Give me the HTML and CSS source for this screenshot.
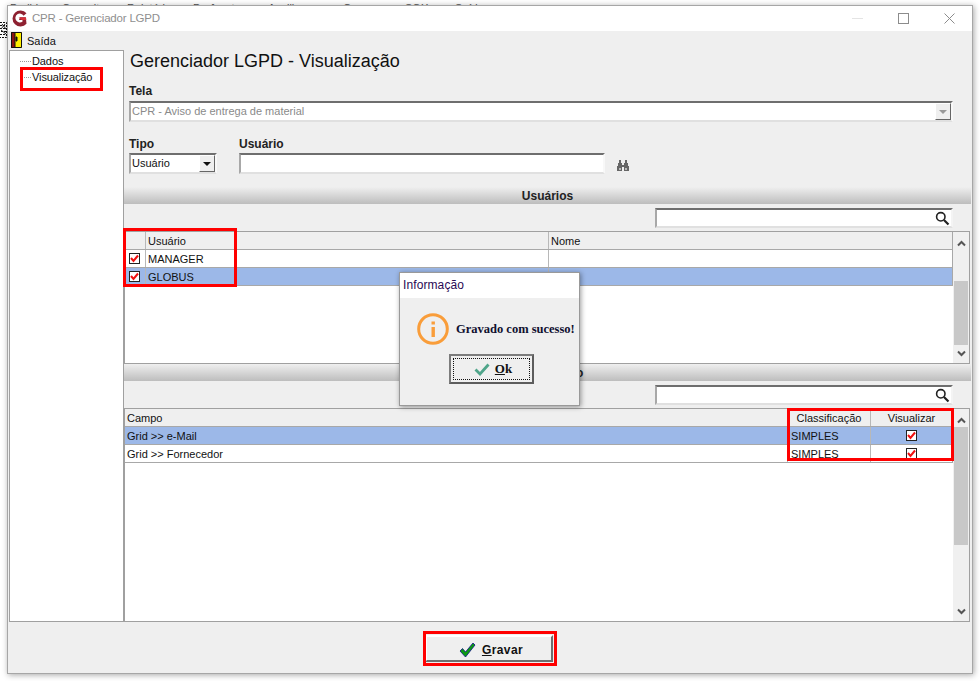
FILE: index.html
```html
<!DOCTYPE html>
<html lang="pt">
<head>
<meta charset="utf-8">
<title>CPR - Gerenciador LGPD</title>
<link rel="stylesheet" href="styles.css">
</head>
<body>
<div class="behind-menu">
  <span>Pedidos</span><span>Consultas</span><span>Relatórios</span><span>Parâmetros</span><span>Auxiliares</span><span>Compras</span><span>SOX</span><span>Saída</span>
</div>
<svg class="behind-icon" width="7" height="16" viewBox="0 0 7 16"><rect x="0" y="0" width="7" height="16" fill="#fff"/><path d="M0 .5h6.500v15H0M0 3.500h6M0 6.500h6M1 9.500h5M0 12.500h6" fill="none" stroke="#111" stroke-dasharray="2 1"/><path d="M2 2l4 5M1 8l5 4M5 2L1 7" fill="none" stroke="#222"/></svg>

<main class="window">
  <header class="titlebar">
    <svg class="app-logo" width="17" height="17" viewBox="0 0 17 17"><path d="M15.500 3.200A8 8 0 1 0 15.500 13.800L14.800 7.200H9L8 10H11.400L11.600 11.400A4.400 4.400 0 1 1 12.600 5.800Z" fill="#8e2131"/><path d="M7.500 7.400H15L15.300 10H11Z" fill="#d8313a"/></svg>
    <span class="title-text">CPR - Gerenciador LGPD</span>
    <div class="win-buttons">
      <svg class="win-min" width="11" height="11" viewBox="0 0 11 11"><path d="M0 5.500H11" stroke="#e4e4e4"/></svg>
      <svg class="win-max" width="11" height="11" viewBox="0 0 11 11"><rect x=".5" y=".5" width="10" height="10" fill="none" stroke="#8c8c8c"/></svg>
      <svg class="win-close" width="11" height="11" viewBox="0 0 11 11"><path d="M.5 .5L10.500 10.500M10.500 .5L.5 10.500" stroke="#8c8c8c"/></svg>
    </div>
  </header>

  <nav class="menubar">
    <svg class="exit-icon" width="11" height="16" viewBox="0 0 11 16"><rect width="11" height="16" fill="#ffef00"/><path d="M0 0h4v16H0z" fill="#8c1414"/><path d="M.5 .5h10v15H.5z" fill="none" stroke="#111"/><path d="M4 1v14M5 5h1v4H5z" stroke="#111" fill="#111"/></svg>
    <span>Saída</span>
  </nav>

  <div class="body">
    <aside class="tree">
      <div class="tree-item"><i class="dots"></i>Dados</div>
      <div class="tree-item tree-second"><i class="dots"></i>Visualização</div>
    </aside>

    <section class="pane">
      <h1 class="pane-title">Gerenciador LGPD - Visualização</h1>

      <label class="field-label tela-label">Tela</label>
      <div class="combo disabled">
        <span>CPR - Aviso de entrega de material</span>
        <b class="combo-btn"><i class="arrow gray"></i></b>
      </div>

      <div class="form-row">
        <div class="tipo-field">
          <label class="field-label">Tipo</label>
          <div class="combo"><span>Usuário</span><b class="combo-btn"><i class="arrow"></i></b></div>
        </div>
        <div class="user-field">
          <label class="field-label">Usuário</label>
          <div class="combo input"></div>
        </div>
        <svg class="binoc" width="12" height="11" viewBox="0 0 12 11" shape-rendering="crispEdges"><path d="M2 0h2v3h1v2h2V3h1V0h2v3h1v3h1v5H7V7H5v4H0V6h1V3h1z" fill="#666"/><path d="M2 8h2v2H2zM8 8h2v2H8z" fill="#bbb"/></svg>
      </div>

      <div class="section-bar first-bar">Usuários</div>
      <div class="search-row">
        <div class="search"><svg width="15" height="15" viewBox="0 0 15 15"><circle cx="5.800" cy="5.800" r="4.200" fill="none" stroke="#222" stroke-width="1.600"/><path d="M9 9l4.500 4.500" stroke="#222" stroke-width="2.200"/></svg></div>
      </div>
      <div class="gridbox users-box">
        <div class="grid">
          <div class="row head cols-users"><div></div><div class="cell">Usuário</div><div class="cell">Nome</div></div>
          <div class="row cols-users"><div class="cell center lead"><svg class="check" width="11" height="11" viewBox="0 0 11 11"><rect x=".5" y=".5" width="10" height="10" fill="#fff" stroke="#222"/><path d="M2 5L4.500 8L9 2.500" fill="none" stroke="#f01010" stroke-width="2"/></svg></div><div class="cell">MANAGER</div><div class="cell"></div></div>
          <div class="row selected cols-users"><div class="cell center lead"><svg class="check" width="11" height="11" viewBox="0 0 11 11"><rect x=".5" y=".5" width="10" height="10" fill="#fff" stroke="#222"/><path d="M2 5L4.500 8L9 2.500" fill="none" stroke="#f01010" stroke-width="2"/></svg></div><div class="cell">GLOBUS</div><div class="cell"></div></div>
        </div>
        <div class="scrollbar">
          <svg class="sb-arrow" width="9" height="7" viewBox="0 0 9 7"><path d="M1 5.500L4.500 2L8 5.500" fill="none" stroke="#555" stroke-width="2"/></svg>
          <div class="sb-track"><div class="sb-thumb thumb-users"></div></div>
          <svg class="sb-arrow" width="9" height="7" viewBox="0 0 9 7"><path d="M1 1.500L4.500 5L8 1.500" fill="none" stroke="#555" stroke-width="2"/></svg>
        </div>
      </div>

      <div class="section-bar">Visualização</div>
      <div class="search-row">
        <div class="search"><svg width="15" height="15" viewBox="0 0 15 15"><circle cx="5.800" cy="5.800" r="4.200" fill="none" stroke="#222" stroke-width="1.600"/><path d="M9 9l4.500 4.500" stroke="#222" stroke-width="2.200"/></svg></div>
      </div>
      <div class="gridbox fields-box">
        <div class="grid">
          <div class="row head cols-fields"><div class="cell">Campo</div><div class="cell mid">Classificação</div><div class="cell mid">Visualizar</div></div>
          <div class="row selected cols-fields"><div class="cell">Grid &gt;&gt; e-Mail</div><div class="cell tight">SIMPLES</div><div class="cell center"><svg class="check" width="11" height="11" viewBox="0 0 11 11"><rect x=".5" y=".5" width="10" height="10" fill="#fff" stroke="#222"/><path d="M2 5L4.500 8L9 2.500" fill="none" stroke="#f01010" stroke-width="2"/></svg></div></div>
          <div class="row cols-fields"><div class="cell">Grid &gt;&gt; Fornecedor</div><div class="cell tight">SIMPLES</div><div class="cell center"><svg class="check" width="11" height="11" viewBox="0 0 11 11"><rect x=".5" y=".5" width="10" height="10" fill="#fff" stroke="#222"/><path d="M2 5L4.500 8L9 2.500" fill="none" stroke="#f01010" stroke-width="2"/></svg></div></div>
        </div>
        <div class="scrollbar">
          <svg class="sb-arrow" width="9" height="7" viewBox="0 0 9 7"><path d="M1 5.500L4.500 2L8 5.500" fill="none" stroke="#555" stroke-width="2"/></svg>
          <div class="sb-track"><div class="sb-thumb thumb-fields"></div></div>
          <svg class="sb-arrow" width="9" height="7" viewBox="0 0 9 7"><path d="M1 1.500L4.500 5L8 1.500" fill="none" stroke="#555" stroke-width="2"/></svg>
        </div>
      </div>
    </section>
  </div>

  <footer class="footer">
    <button class="btn-save" type="button">
      <svg width="17" height="16" viewBox="0 0 17 16"><path d="M1 9L3.500 6.500L6.500 10L14 1L16 3L6.500 15Z" fill="#0c9a12" stroke="#10108a" stroke-width=".8"/></svg>
      <span><u>G</u>ravar</span>
    </button>
  </footer>
</main>

<div class="dialog">
  <div class="dialog-title">Informação</div>
  <div class="dialog-body">
    <div class="dialog-msg">
      <svg width="32" height="32" viewBox="0 0 32 32"><circle cx="16" cy="16" r="14.300" fill="none" stroke="#f99d3a" stroke-width="3"/><rect x="14.500" y="14" width="3.400" height="10" fill="#f99d3a"/><rect x="14.500" y="8.500" width="3.400" height="3" fill="#f99d3a"/></svg>
      <span>Gravado com sucesso!</span>
    </div>
    <button class="btn-ok" type="button">
      <span class="focus">
        <svg width="16" height="13" viewBox="0 0 16 13"><path d="M1.500 6.500L6 11L14.500 1.500" fill="none" stroke="#4fa58a" stroke-width="2.800"/></svg>
        <span><u>O</u>k</span>
      </span>
    </button>
  </div>
</div>

<div class="mark mark-tree"></div>
<div class="mark mark-users"></div>
<div class="mark mark-fields"></div>
<div class="mark mark-save"></div>
</body>
</html>
```
FILE: styles.css
```css
* { box-sizing: border-box; }
html, body { margin: 0; padding: 0; }
body {
  position: relative;
  width: 980px;
  height: 681px;
  overflow: hidden;
  background: #fff;
  font: 11px/1 "Liberation Sans", Arial, sans-serif;
  color: #111;
}

.behind-menu {
  display: grid;
  grid-template-columns: 52px 65px 66px 75px 75px 62px 50px auto;
  height: 6px;
  overflow: hidden;
  padding: 3px 0 0 10px;
  font-size: 11px;
  color: #555;
}
.behind-icon { position: absolute; left: 0; top: 22px; }

.window {
  position: absolute;
  left: 7px;
  top: 5px;
  width: 966px;
  height: 669px;
  display: flex;
  flex-direction: column;
  background: #efefef;
  border: 1px solid #a6a6a6;
  box-shadow: 1px 1px 6px rgba(0,0,0,.35);
}

.titlebar {
  display: flex;
  align-items: center;
  height: 25px;
  flex: none;
  background: #fff;
  padding-left: 3px;
}
.app-logo { flex: none; }
.title-text {
  margin-left: 4px;
  font-size: 11.5px;
  color: #8f8f8f;
  letter-spacing: -.2px;
}
.win-buttons {
  margin-left: auto;
  display: flex;
  align-items: center;
  gap: 35px;
  padding-right: 17px;
}

.menubar {
  display: flex;
  align-items: flex-start;
  height: 19px;
  flex: none;
  padding: 1px 0 0 3px;
  gap: 5px;
}
.menubar span { margin-top: 4px; }
.exit-icon { flex: none; }

.body { display: flex; flex: none; height: 572px; margin-left: 1px; }

.tree {
  flex: none;
  width: 115px;
  background: #fff;
  border: 1px solid #a0a0a0;
  padding-top: 4px;
}
.tree-item {
  position: relative;
  height: 16px;
  line-height: 12px;
  padding-left: 22px;
  white-space: nowrap;
  letter-spacing: -.1px;
}
.dots {
  position: absolute;
  left: 10px;
  top: 6px;
  width: 11px;
  border-top: 1px dotted #999;
}

.pane { flex: 1; min-width: 0; padding-right: 1px; }
.pane-title {
  margin: 0 0 0 6px;
  height: 20px;
  padding-top: 1px;
  font-size: 18px;
  line-height: 20px;
  font-weight: 400;
  color: #111;
}
.field-label {
  display: block;
  height: 13px;
  line-height: 13px;
  font-size: 12px;
  font-weight: 700;
  color: #222;
}
.tela-label { margin: 15px 0 3px 5px; }

.combo {
  display: flex;
  align-items: center;
  height: 21px;
  background: #fff;
  border: 2px solid #fff;
  border-top-color: #6e6e6e;
  border-left-color: #a8a8a8;
  border-bottom-color: #e0e0e0;
  border-right-color: #f8f8f8;
  padding-left: 1px;
  position: relative;
}
.pane > .combo { margin: 0 18px 0 5px; }
.combo.disabled span { color: #8a8a8a; }
.combo-btn {
  position: absolute;
  right: 0;
  top: 0;
  bottom: 0;
  width: 16px;
  background: #efefef;
  border: 1px solid #fff;
  border-right-color: #666;
  border-bottom-color: #666;
  display: flex;
  align-items: center;
  justify-content: center;
}
.arrow {
  width: 0;
  height: 0;
  border: 4px solid transparent;
  border-top: 4px solid #111;
  border-bottom: 0;
}
.arrow.gray { border-top-color: #999; }

.form-row {
  display: flex;
  align-items: flex-end;
  margin: 14px 0 0 5px;
  height: 38px;
}
.form-row .field-label { margin-bottom: 2px; }
.tipo-field { width: 88px; flex: none; }
.user-field { width: 366px; flex: none; margin-left: 22px; }
.binoc { margin: 0 0 3px 12px; flex: none; }

.section-bar {
  height: 17px;
  line-height: 18px;
  text-align: center;
  font-size: 12px;
  font-weight: 700;
  color: #222;
  background: linear-gradient(#efefef, #bdbdbd);
}
.first-bar { margin-top: 13px; }

.search-row {
  display: flex;
  justify-content: flex-end;
  padding-right: 18px;
  height: 27px;
  padding-top: 4px;
}
.search {
  width: 298px;
  height: 20px;
  padding-right: 1px;
  background: #fff;
  border: 2px solid #fff;
  border-top-color: #6e6e6e;
  border-left-color: #a8a8a8;
  border-bottom-color: #e0e0e0;
  border-right-color: #f4f4f4;
  display: flex;
  justify-content: flex-end;
  align-items: center;
}

.gridbox {
  display: flex;
  background: #fff;
  border: 1px solid #a0a0a0;
  margin-right: 1px;
}
.users-box { height: 133px; }
.fields-box { height: 214px; }
.grid { width: 828px; flex: none; }

.row {
  display: grid;
  height: 18px;
  border-bottom: 1px solid #a8a8a8;
  border-right: 1px solid #a8a8a8;
  background: #fff;
}
.row.head { background: #efefef; }
.row.selected { background: #9cb8e8; }
.cols-users { grid-template-columns: 21px 403px 1fr; }
.cols-fields { grid-template-columns: 663px 83px 1fr; }
.row > div { border-right: 1px solid #b8b8b8; min-width: 0; }
.row > div:last-child { border-right: 0; }
.cell {
  display: flex;
  align-items: center;
  padding: 1px 0 0 2px;
  white-space: nowrap;
  overflow: hidden;
}
.cell.mid { justify-content: center; padding-left: 0; }
.cell.center { justify-content: center; padding: 0; }
.cell.lead { padding-right: 2px; }
.cell.tight { padding-left: 3px; }
.check { display: block; flex: none; }

.scrollbar {
  flex: 1;
  display: flex;
  flex-direction: column;
  align-items: center;
  background: #f0f0f0;
  padding-top: 8px;
  padding-bottom: 6px;
}
.sb-track { flex: 1; width: 100%; position: relative; }
.sb-thumb { position: absolute; left: 1px; right: 1px; background: #c8c8c8; }
.thumb-users { top: 34px; height: 64px; }
.thumb-fields { top: 3px; height: 118px; }

.footer {
  flex: 1;
  display: flex;
  justify-content: center;
  align-items: flex-start;
  padding-top: 13px;
  padding-right: 2px;
}
.btn-save {
  display: flex;
  align-items: center;
  justify-content: center;
  gap: 6px;
  width: 128px;
  height: 27px;
  background: #efefef;
  border: 2px solid;
  border-color: #fff #6e6e6e #6e6e6e #fff;
  font: 700 12px "Liberation Sans", Arial, sans-serif;
  letter-spacing: .4px;
  color: #111;
  padding: 2px 0 0 4px;
}

.dialog {
  position: absolute;
  left: 399px;
  top: 272px;
  width: 181px;
  height: 134px;
  background: #efefef;
  border: 1px solid #999;
  box-shadow: 1px 1px 5px rgba(0,0,0,.4);
  display: flex;
  flex-direction: column;
}
.dialog-title {
  height: 25px;
  flex: none;
  background: #fff;
  padding-left: 3px;
  line-height: 24px;
  font-size: 12px;
  letter-spacing: .1px;
  color: #2a0a55;
}
.dialog-body {
  flex: 1;
  display: flex;
  flex-direction: column;
  align-items: center;
}
.dialog-msg {
  display: flex;
  align-items: center;
  align-self: flex-start;
  gap: 7px;
  margin: 15px 0 0 17px;
  font: 700 12.5px "Liberation Serif", serif;
  color: #101030;
  white-space: nowrap;
}
.btn-ok {
  margin: 9px 0 0 4px;
  width: 85px;
  height: 30px;
  padding: 2px;
  background: #efefef;
  border: 2px solid;
  border-color: #7c7c7c #5c5c5c #5c5c5c #7c7c7c;
}
.focus {
  display: flex;
  height: 100%;
  align-items: center;
  justify-content: center;
  gap: 5px;
  padding-left: 3px;
  border: 1px dotted #111;
  font: 700 13px "Liberation Serif", serif;
  color: #111;
}

.mark {
  position: absolute;
  border: 3px solid #ff0000;
  pointer-events: none;
}
.mark-tree { left: 20px; top: 67px; width: 83px; height: 24px; }
.mark-users { left: 123px; top: 228px; width: 114px; height: 59px; }
.mark-fields { left: 787px; top: 408px; width: 167px; height: 53px; }
.mark-save { left: 423px; top: 631px; width: 134px; height: 35px; }
```
